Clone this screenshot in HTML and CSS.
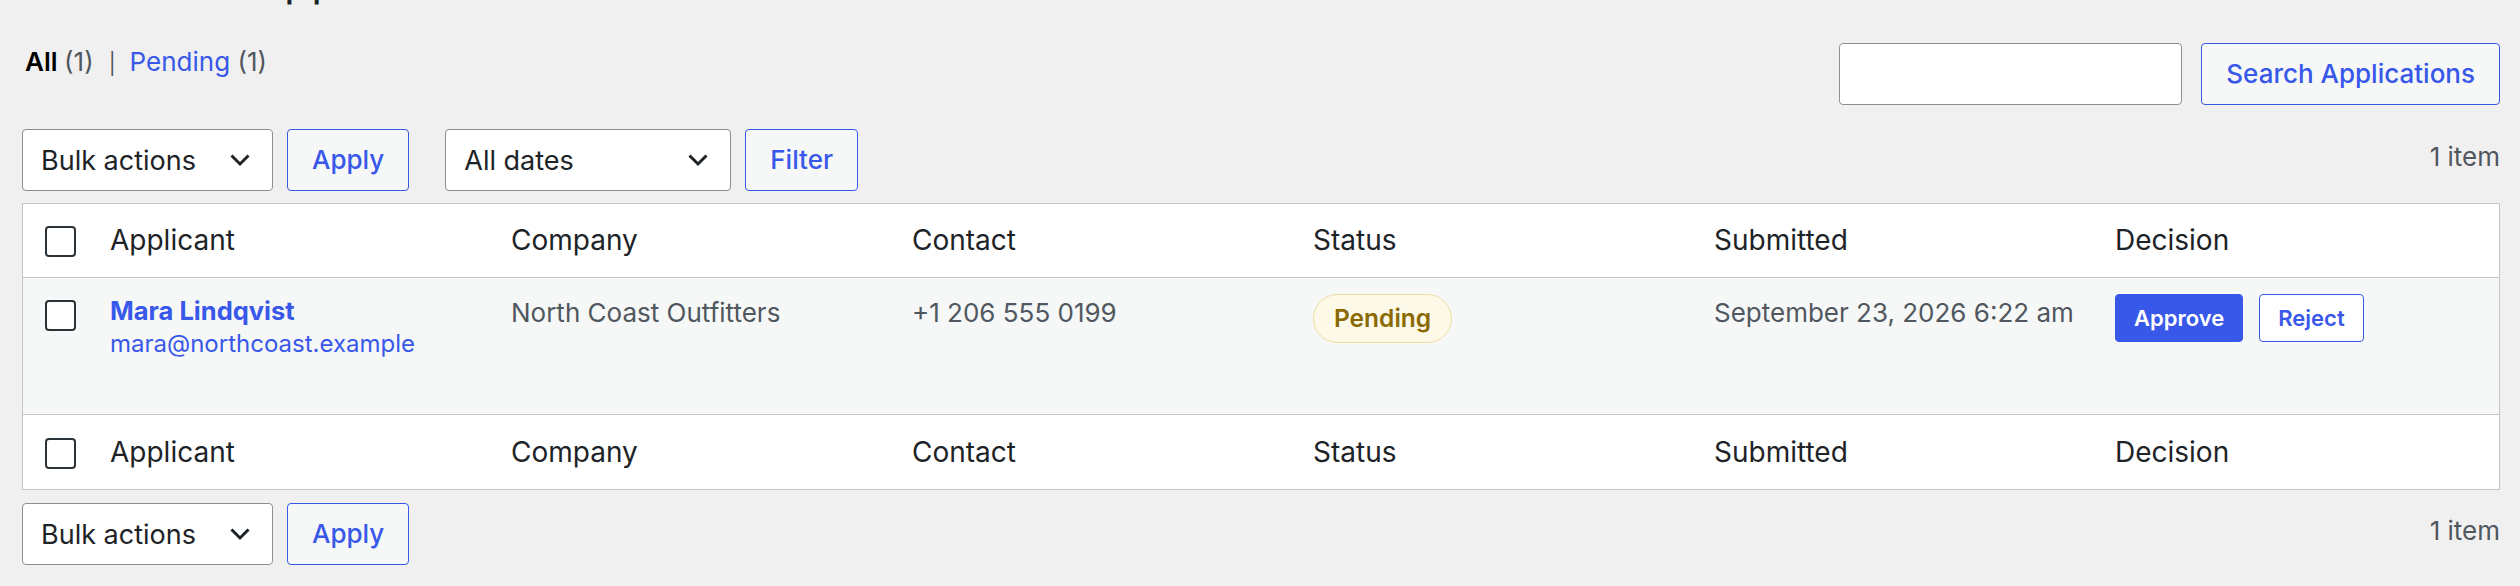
FILE: index.html
```html
<!DOCTYPE html>
<html lang="en">
<head>
<meta charset="utf-8">
<title>Wholesale Applications</title>
<link rel="stylesheet" href="styles.css">
</head>
<body>
<div class="wrap">
  <h1 class="page-title">Wholesale Applications</h1>

  <div class="top-row">
    <ul class="subsubsub">
      <li><a class="current" href="#">All <span class="count">(1)</span></a></li>
      <li class="sep">|</li>
      <li><a href="#">Pending <span class="count">(1)</span></a></li>
    </ul>
    <form class="search-box">
      <input class="search-input" type="search" aria-label="Search Applications">
      <button class="button" type="button">Search Applications</button>
    </form>
  </div>

  <div class="tablenav">
    <div class="actions">
      <div class="select select-bulk"><span>Bulk actions</span><svg class="chev" width="22" height="14" viewBox="0 0 22 14"><polyline points="2.5,2.5 11,11 19.5,2.5"/></svg></div>
      <button class="button" type="button">Apply</button>
      <div class="select select-dates group-gap"><span>All dates</span><svg class="chev" width="22" height="14" viewBox="0 0 22 14"><polyline points="2.5,2.5 11,11 19.5,2.5"/></svg></div>
      <button class="button" type="button">Filter</button>
    </div>
    <div class="displaying-num">1 item</div>
  </div>

  <table class="list-table">
    <colgroup>
      <col class="col-check">
      <col class="col-std">
      <col class="col-std">
      <col class="col-std">
      <col class="col-std">
      <col class="col-std">
      <col>
    </colgroup>
    <thead>
      <tr>
        <th class="check-column"><span class="checkbox"></span></th>
        <th>Applicant</th>
        <th>Company</th>
        <th>Contact</th>
        <th>Status</th>
        <th>Submitted</th>
        <th>Decision</th>
      </tr>
    </thead>
    <tbody>
      <tr>
        <td class="check-column"><span class="checkbox"></span></td>
        <td class="cell-applicant">
          <a class="applicant-name" href="#">Mara Lindqvist</a>
          <a class="applicant-email" href="#">mara@northcoast.example</a>
        </td>
        <td>North Coast Outfitters</td>
        <td>+1 206 555 0199</td>
        <td><span class="badge">Pending</span></td>
        <td>September 23, 2026 6:22 am</td>
        <td>
          <div class="decision">
            <button class="btn-small btn-primary" type="button">Approve</button>
            <button class="btn-small" type="button">Reject</button>
          </div>
        </td>
      </tr>
    </tbody>
    <tfoot>
      <tr>
        <th class="check-column"><span class="checkbox"></span></th>
        <th>Applicant</th>
        <th>Company</th>
        <th>Contact</th>
        <th>Status</th>
        <th>Submitted</th>
        <th>Decision</th>
      </tr>
    </tfoot>
  </table>

  <div class="tablenav tablenav-bottom">
    <div class="actions">
      <div class="select select-bulk"><span>Bulk actions</span><svg class="chev" width="22" height="14" viewBox="0 0 22 14"><polyline points="2.5,2.5 11,11 19.5,2.5"/></svg></div>
      <button class="button" type="button">Apply</button>
    </div>
    <div class="displaying-num">1 item</div>
  </div>
</div>
</body>
</html>
```
FILE: styles.css
```css
html, body {
  margin: 0;
  padding: 0;
  background: #f0f0f1;
}

body {
  font-family: Inter, "Noto Sans", "Liberation Sans", sans-serif;
  color: #1d2327;
  overflow: hidden;
}

.wrap {
  padding: 0 20px 0 22px;
}

.page-title {
  margin: -46px 0 0;
  font-size: 44.5px;
  line-height: 52px;
  font-weight: 400;
  color: #1d2327;
}

/* top row: views + search */
.top-row {
  display: flex;
  justify-content: space-between;
  align-items: flex-start;
  margin-top: 37px;
}

.subsubsub {
  display: flex;
  align-items: baseline;
  list-style: none;
  margin: 0;
  padding: 0 0 0 3px;
  font-size: 26px;
  line-height: 38px;
}

.subsubsub a {
  color: #3858e9;
  text-decoration: none;
}

.subsubsub a.current {
  color: #000;
  font-weight: 600;
}

.subsubsub .count {
  color: #50575e;
  font-weight: 400;
}

.subsubsub .sep {
  color: #50575e;
  font-size: 21px;
  margin: 0 14px 0 15px;
}

.search-box {
  display: flex;
  gap: 19px;
  margin: 0;
}

.search-input {
  box-sizing: border-box;
  width: 343px;
  height: 62px;
  margin: 0;
  border: 1px solid #8c8f94;
  border-radius: 4px;
  background: #fff;
  font: inherit;
}

.button {
  box-sizing: border-box;
  height: 62px;
  margin: 0;
  padding: 0 24px;
  border: 1px solid #3858e9;
  border-radius: 4px;
  background: #f6f7f7;
  color: #3858e9;
  font-family: inherit;
  font-size: 26px;
  font-weight: 500;
  line-height: 1;
  white-space: nowrap;
}

/* tablenav */
.tablenav {
  display: flex;
  justify-content: space-between;
  align-items: center;
  margin-top: 24px;
  height: 62px;
}

.tablenav-bottom {
  margin-top: 13px;
}

.actions {
  display: flex;
  align-items: center;
  gap: 14px;
}

.group-gap {
  margin-left: 22px;
}

.select {
  box-sizing: border-box;
  display: flex;
  align-items: center;
  justify-content: space-between;
  height: 62px;
  padding: 0 21px 0 18px;
  border: 1px solid #8c8f94;
  border-radius: 4px;
  background: #fff;
  font-size: 27px;
  color: #1d2327;
}

.select-bulk {
  width: 251px;
}

.select-dates {
  width: 286px;
}

.chev {
  display: block;
  fill: none;
  stroke: #1d2327;
  stroke-width: 3;
}

.displaying-num {
  font-size: 26px;
  color: #50575e;
  margin-bottom: 7px;
}

/* table */
.list-table {
  width: 100%;
  margin-top: 12px;
  border: 1px solid #c3c4c7;
  border-collapse: separate;
  border-spacing: 0;
  table-layout: fixed;
  background: #fff;
}

.col-check {
  width: 71px;
}

.col-std {
  width: 401px;
}

.list-table th {
  text-align: left;
  font-weight: 400;
  font-size: 28px;
  line-height: 40px;
  color: #1d2327;
  padding: 16px 16px 17px;
  vertical-align: top;
}

.list-table thead th {
  border-bottom: 1px solid #c3c4c7;
}

.list-table tfoot th {
  border-top: 1px solid #c3c4c7;
  padding: 17px 16px 17px;
}

.list-table tbody tr {
  background: #f6f7f7;
}

.list-table td {
  padding: 16px 16px 16px;
  font-size: 26px;
  line-height: 38px;
  color: #50575e;
  vertical-align: top;
}

.list-table .check-column {
  padding: 22px 0 0 22px;
  line-height: 0;
}

.list-table tfoot .check-column {
  padding-top: 23px;
}

.checkbox {
  box-sizing: border-box;
  display: inline-block;
  width: 31px;
  height: 31px;
  border: 2px solid #2c3338;
  border-radius: 4px;
  background: #fff;
}

.list-table .cell-applicant {
  padding-bottom: 54px;
}

.applicant-name {
  display: block;
  color: #3858e9;
  font-weight: 700;
  font-size: 25.5px;
  line-height: 34px;
  text-decoration: none;
}

.applicant-email {
  display: block;
  color: #3858e9;
  font-size: 24px;
  line-height: 32px;
  text-decoration: none;
}

.badge {
  display: inline-block;
  padding: 7px 20px;
  border: 1px solid #efdd9c;
  border-radius: 999px;
  background: #fcf9e8;
  color: #8a6a00;
  font-size: 24.5px;
  font-weight: 600;
  line-height: 33px;
}

.decision {
  display: flex;
  gap: 16px;
}

.btn-small {
  box-sizing: border-box;
  height: 48px;
  margin: 0;
  padding: 0 18px;
  border: 1px solid #3858e9;
  border-radius: 4px;
  background: #fff;
  color: #3858e9;
  font-family: inherit;
  font-size: 22px;
  font-weight: 600;
  line-height: 1;
}

.btn-primary {
  background: #3858e9;
  color: #fff;
}
```
